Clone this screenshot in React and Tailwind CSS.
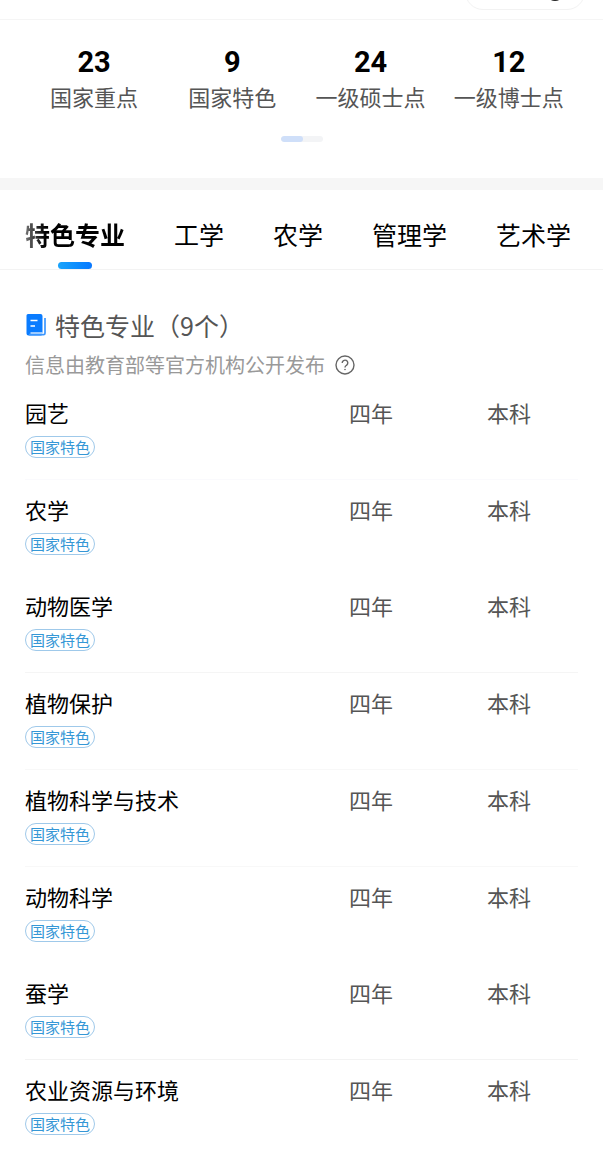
import React, { useState } from 'react';

const stats = [
  { value: 23, label: '国家重点' },
  { value: 9, label: '国家特色' },
  { value: 24, label: '一级硕士点' },
  { value: 12, label: '一级博士点' },
];

const tabs = ['特色专业', '工学', '农学', '管理学', '艺术学'];

const majors = [
  { name: '园艺', line: 'border-b border-[#fafafd]' },
  { name: '农学', line: '' },
  { name: '动物医学', line: 'border-b border-[#f5f5f5]' },
  { name: '植物保护', line: 'border-b border-[#f8f8f8]' },
  { name: '植物科学与技术', line: 'border-b border-[#f8f8f8]' },
  { name: '动物科学', line: '' },
  { name: '蚕学', line: 'border-b border-[#f3f3f3]' },
  { name: '农业资源与环境', line: '' },
];

const DocIcon = () => (
  <svg width="22" height="24" viewBox="0 0 22 24" fill="none" aria-hidden="true">
    <path d="M3 1h12.500a2 2 0 0 1 2 2v16.500l-1 3H3.500a2 2 0 0 1-2-2v-18A1.500 1.500 0 0 1 3 1Z" fill="#0a7cff" />
    <path d="M4 21.700h14.500a1.500 1.500 0 0 0 1.500-1.500V5" stroke="#3c97ff" strokeWidth="1.700" />
    <path d="M5.500 20h12" stroke="#fff" strokeWidth="1.200" />
    <path d="M5.500 7.500h7M5.500 13h4.500" stroke="#fff" strokeWidth="1.600" />
  </svg>
);

const HelpIcon = () => (
  <svg width="20" height="20" viewBox="0 0 20 20" fill="none" stroke="#666" strokeWidth="1.400" aria-hidden="true">
    <circle cx="10" cy="10" r="9" />
    <path d="M7.200 8a2.800 2.800 0 1 1 4.300 2.300c-1 .7-1.500 1.100-1.500 2.200" />
    <circle cx="10" cy="14.500" r=".5" fill="#666" strokeWidth=".6" />
  </svg>
);

const App = () => {
  const [active, setActive] = useState('特色专业');

  return (
    <div className="min-h-screen bg-white text-black font-['Noto_Sans_CJK_SC','Noto_Sans',sans-serif]">
      <header className="flex h-5 items-end justify-end overflow-hidden border-b border-[#f5f5f5] pr-[18px] pb-[9px]">
        <div className="flex h-9 w-[120px] shrink-0 items-center rounded-full border border-[#f2f2f2]">
          <span className="w-1/2" />
          <span className="flex w-1/2 justify-center">
            <svg width="18" height="18" viewBox="0 0 18 18" fill="none" stroke="#222" strokeWidth="2" aria-hidden="true">
              <circle cx="9" cy="9" r="8" />
              <circle cx="9" cy="9" r="3" fill="#222" />
            </svg>
          </span>
        </div>
      </header>

      <section className="px-[25px] pt-7 pb-9">
        <div className="grid grid-cols-4">
          {stats.map((item) => (
            <div key={item.label} className="flex flex-col items-center gap-1.5 whitespace-nowrap">
              <strong className="font-['Roboto',sans-serif] text-[29px] leading-7 font-bold">{item.value}</strong>
              <span className="text-[22px] leading-7 text-[#555]">{item.label}</span>
            </div>
          ))}
        </div>
        <div className="mx-auto mt-[26px] h-1.5 w-[42px] overflow-hidden rounded-full bg-[#f3f4f6]">
          <div className="h-full w-[22px] rounded-full bg-[#cfdff9]" />
        </div>
      </section>

      <div className="h-3 bg-[#f6f6f6]" />

      <nav className="flex gap-[49px] overflow-hidden border-b border-[#f3f3f3] px-[25px] pt-[26px]">
        {tabs.map((tab) => (
          <button
            key={tab}
            type="button"
            onClick={() => setActive(tab)}
            className="flex shrink-0 flex-col items-center gap-2.5 text-[25px] leading-9"
          >
            {tab === active ? (
              <>
                <span className="bg-linear-to-r from-[#777] to-black to-25% bg-clip-text font-bold text-transparent">{tab}</span>
                <span className="h-[7px] w-[34px] rounded-full bg-linear-to-r from-[#1ba4fb] to-[#0a78ff]" />
              </>
            ) : (
              <span>{tab}</span>
            )}
          </button>
        ))}
      </nav>

      <main className="px-[25px] pt-[37px]">
        <h2 className="flex items-center gap-2 text-[25px] leading-9 text-[#555]">
          <DocIcon />
          {active}（9个）
        </h2>
        <p className="mt-2 flex items-center gap-2.5 text-[20px] leading-7 text-[#999]">
          信息由教育部等官方机构公开发布
          <button type="button" aria-label="说明">
            <HelpIcon />
          </button>
        </p>

        <table className="mt-1 w-full table-fixed border-separate border-spacing-0 text-left text-[22px] leading-8">
          <colgroup>
            <col />
            <col className="w-[138px]" />
            <col className="w-[91px]" />
          </colgroup>
          <tbody>
            {majors.map((major) => (
              <tr key={major.name}>
                <th scope="row" className={`pt-[13px] pb-[21px] font-normal ${major.line}`}>
                  <div>{major.name}</div>
                  <div className="mt-2 flex">
                    <span className="h-[22px] rounded-full border border-[#9fc9ea] px-1 text-[15px] leading-5 text-[#3597d6]">
                      国家特色
                    </span>
                  </div>
                </th>
                <td className={`pt-[13px] align-top text-[#555] ${major.line}`}>四年</td>
                <td className={`pt-[13px] align-top text-[#555] ${major.line}`}>本科</td>
              </tr>
            ))}
          </tbody>
        </table>
      </main>
    </div>
  );
};

export default App;
